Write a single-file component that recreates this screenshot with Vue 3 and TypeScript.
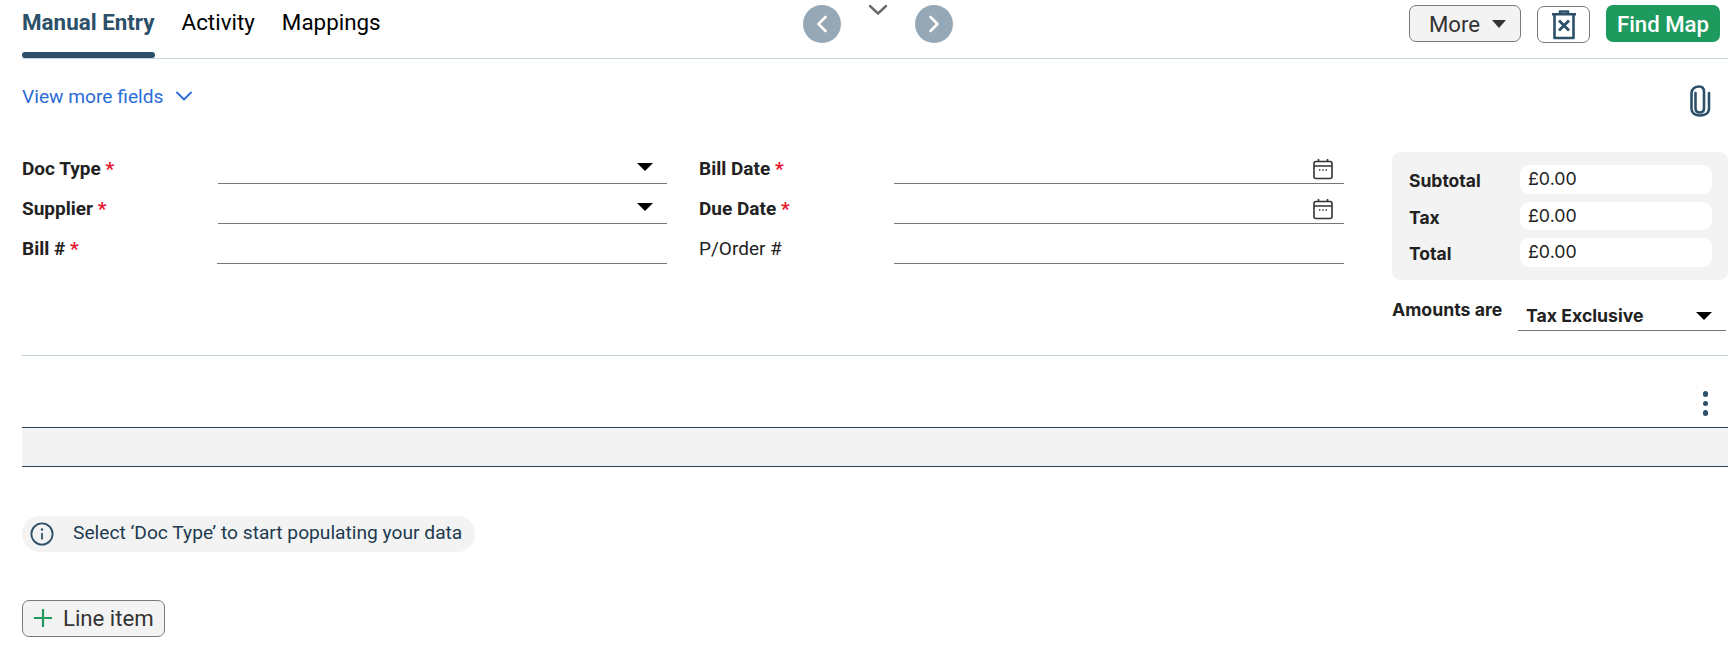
<script setup lang="ts">
const tabs = ['Manual Entry', 'Activity', 'Mappings']
const totals = ['Subtotal', 'Tax', 'Total']
const leftFields = [
  { label: 'Doc Type', required: true, kind: 'select' },
  { label: 'Supplier', required: true, kind: 'select' },
  { label: 'Bill #', required: true, kind: 'text' },
]
const rightFields = [
  { label: 'Bill Date', required: true, kind: 'date' },
  { label: 'Due Date', required: true, kind: 'date' },
  { label: 'P/Order #', required: false, kind: 'text' },
]
</script>

<template>
  <div class="page">
    <header class="head">
      <nav class="tabs">
        <a v-for="(t, i) in tabs" :key="t" class="tab" :class="{ active: i === 0 }">{{ t }}</a>
      </nav>
      <div class="pager">
        <button class="round">
          <svg width="14" height="20" viewBox="0 0 14 20"><path d="M10.5 3 L3.5 10 L10.5 17" fill="none" stroke="#fff" stroke-width="2.6" stroke-linecap="round" stroke-linejoin="round"/></svg>
        </button>
        <svg class="pager-down" width="20" height="12" viewBox="0 0 20 12"><path d="M2 2 L10 9.5 L18 2" fill="none" stroke="#6b6b6b" stroke-width="2.4" stroke-linecap="round" stroke-linejoin="round"/></svg>
        <button class="round">
          <svg width="14" height="20" viewBox="0 0 14 20"><path d="M3.5 3 L10.5 10 L3.5 17" fill="none" stroke="#fff" stroke-width="2.6" stroke-linecap="round" stroke-linejoin="round"/></svg>
        </button>
      </div>
      <div class="actions">
        <button class="btn more">More<span class="caret dark"></span></button>
        <button class="btn trash">
          <svg width="26" height="30" viewBox="0 0 26 30"><path d="M1 4.3 H25 M9 4 V1.5 H17 V4 M3.5 5 V28 H22.5 V5" fill="none" stroke="#2c5069" stroke-width="2.6" stroke-linejoin="round"/><path d="M8 10.5 L18 20.5 M18 10.5 L8 20.5" fill="none" stroke="#2c5069" stroke-width="2.8"/></svg>
        </button>
        <button class="btn find">Find Map</button>
      </div>
    </header>

    <div class="subbar">
      <a class="viewmore">View more fields
        <svg width="16" height="10" viewBox="0 0 16 10"><path d="M1 1.5 L8 8.5 L15 1.5" fill="none" stroke="#2a6cd6" stroke-width="1.8" stroke-linecap="round" stroke-linejoin="round"/></svg>
      </a>
      <svg class="clip" width="22" height="32" viewBox="0 0 22 32"><path d="M6.5 8 V23 C6.5 26 8.5 27.5 10.8 27.5 C13.1 27.5 15 26 15 23 V6.5 C15 3.2 13 1.5 10.5 1.5 C6.5 1.5 3 3.5 2.5 8 V23.5 C2.5 28 6 30.5 11 30.5 C16 30.5 20 28 20 23.5 V8" fill="none" stroke="#2c5069" stroke-width="2.6" stroke-linecap="round"/></svg>
    </div>

    <section class="form">
      <div class="col left">
        <div v-for="f in leftFields" :key="f.label" class="row">
          <label class="lbl" :class="{ strong: f.required }">{{ f.label }} <em v-if="f.required">*</em></label>
          <div class="field"><span v-if="f.kind === 'select'" class="caret"></span></div>
        </div>
      </div>
      <div class="col right">
        <div v-for="f in rightFields" :key="f.label" class="row">
          <label class="lbl" :class="{ strong: f.required }">{{ f.label }} <em v-if="f.required">*</em></label>
          <div class="field">
            <svg v-if="f.kind === 'date'" class="cal" width="20" height="22" viewBox="0 0 20 22">
              <rect x="1" y="3.5" width="18" height="17" rx="2" fill="none" stroke="#333" stroke-width="1.6"/>
              <path d="M1 8 H19 M5.5 1 V4 M14.5 1 V4" fill="none" stroke="#333" stroke-width="1.6"/>
              <path d="M6 12 h1.4 M9.3 12 h1.4 M12.6 12 h1.4" stroke="#333" stroke-width="1.4"/>
            </svg>
          </div>
        </div>
      </div>
      <aside class="side">
        <div class="totals">
          <div v-for="t in totals" :key="t" class="total-row">
            <span class="total-lbl">{{ t }}</span>
            <div class="total-val">£0.00</div>
          </div>
        </div>
        <div class="amounts">
          <span class="amounts-lbl">Amounts are</span>
          <div class="amounts-sel">Tax Exclusive<span class="caret"></span></div>
        </div>
      </aside>
    </section>

    <div class="grid-head">
      <span class="dots"><i></i><i></i><i></i></span>
    </div>
    <div class="grid-row"></div>

    <div class="hint">
      <svg width="24" height="24" viewBox="0 0 24 24"><circle cx="12" cy="12" r="10.6" fill="none" stroke="#2c5069" stroke-width="1.8"/><path d="M12 11 V17.5" stroke="#2c5069" stroke-width="1.8"/><circle cx="12" cy="7.5" r="1.2" fill="#2c5069"/></svg>
      <span>Select ‘Doc Type’ to start populating your data</span>
    </div>

    <button class="btn line">
      <svg width="20" height="20" viewBox="0 0 20 20"><path d="M10 1 V19 M1 10 H19" stroke="#1f9a5f" stroke-width="2.2"/></svg>
      Line item
    </button>
  </div>
</template>

<style>
html, body { margin: 0; background: #fff; }
</style>

<style scoped>
.page {
  width: 1730px;
  height: 651px;
  box-sizing: border-box;
  padding: 0 2px 0 22px;
  font-family: Roboto, "Liberation Sans", sans-serif;
  color: #222;
  overflow: hidden;
}
.head {
  display: flex;
  height: 59px;
  box-sizing: border-box;
  border-bottom: 1px solid #c4d2d9;
}
.tabs { display: flex; gap: 27px; }
.tab {
  height: 58px;
  box-sizing: border-box;
  padding-top: 9px;
  font-size: 22.4px;
  line-height: 26px;
  color: #000;
}
.tab.active {
  font-weight: 700;
  color: #2c5069;
  position: relative;
}
.tab.active::after {
  content: "";
  position: absolute;
  left: 0;
  right: 0;
  bottom: 0;
  height: 6px;
  border-radius: 3px;
  background: #2c5069;
}
.pager {
  display: flex;
  align-items: flex-start;
  margin-left: 422px;
  padding-top: 5px;
  gap: 27px;
}
.round {
  width: 38px;
  height: 38px;
  padding: 0;
  border: 0;
  border-radius: 50%;
  background: #96a8b5;
  display: flex;
  align-items: center;
  justify-content: center;
}
.pager-down { margin-top: -1px; }
.actions {
  margin-left: auto;
  margin-right: 8px;
  display: flex;
  align-items: flex-start;
  padding-top: 5px;
  gap: 16px;
}
.btn {
  box-sizing: border-box;
  height: 37px;
  font-family: inherit;
  font-size: 22.2px;
  border-radius: 7px;
  padding: 0;
  display: flex;
  align-items: center;
}
.more {
  width: 112px;
  background: #f3f3f3;
  border: 1px solid #7a7a7a;
  color: #333;
  padding-left: 19px;
}
.more .caret { margin-left: 12px; }
.trash {
  width: 53px;
  margin-top: 1px;
  background: #fff;
  border: 1px solid #7a7a7a;
  justify-content: center;
}
.find {
  width: 114px;
  background: #1f9a5f;
  border: 0;
  color: #fff;
  justify-content: center;
  font-weight: 500;
}
.caret {
  display: inline-block;
  width: 0;
  height: 0;
  border-left: 8px solid transparent;
  border-right: 8px solid transparent;
  border-top: 8px solid #000;
}
.caret.dark { border-top-color: #333; border-left-width: 7.5px; border-right-width: 7.5px; }
.subbar {
  display: flex;
  justify-content: space-between;
  height: 93px;
  padding-right: 17px;
}
.viewmore {
  display: flex;
  align-items: center;
  gap: 13px;
  height: 22px;
  margin-top: 26px;
  color: #2a6cd6;
  font-size: 19.2px;
}
.clip { margin-top: 26px; }
.form {
  display: flex;
  align-items: flex-start;
  height: 203px;
  border-bottom: 1px solid #c4d2d9;
}
.col { display: flex; flex-direction: column; margin-top: 1px; }
.left { width: 645px; }
.left .row { width: 645px; }
.left .field { width: 449px; margin-left: 196px; }
.left .row:last-child .field { width: 450px; margin-left: 195px; }
.left .row .lbl { width: 0; }
.right { width: 693px; margin-left: 32px; }
.right .row { width: 645px; }
.right .field { width: 450px; margin-left: 195px; }
.right .row .lbl { width: 0; }
.row {
  display: flex;
  height: 40px;
  box-sizing: border-box;
}
.col .row:first-child { height: 31px; }
.lbl {
  font-size: 19px;
  line-height: 24px;
  padding-top: 13px;
  white-space: nowrap;
  color: #222;
}
.col .row:first-child .lbl { padding-top: 4px; }
.lbl.strong { font-weight: 700; }
.lbl em { color: #e8112d; font-style: normal; }
.field {
  box-sizing: border-box;
  border-bottom: 1.2px solid #777;
  position: relative;
  display: flex;
  align-items: flex-start;
  justify-content: flex-end;
  padding-right: 13px;
}
.field .caret { margin-top: 10px; margin-right: 1px; }
.right .field { padding-right: 11px; }
.col .row:not(:first-child) .field .caret { margin-top: 19px; }
.cal { margin-top: 5px; }
.col .row:not(:first-child) .cal { margin-top: 14px; }
.side { width: 336px; font-family: Inter, "Liberation Sans", sans-serif; }
.totals {
  box-sizing: border-box;
  height: 128px;
  padding: 13px 16px;
  background: #f3f3f3;
  border-radius: 8px;
  display: flex;
  flex-direction: column;
  gap: 8px;
}
.total-row { display: flex; height: 29px; }
.total-lbl {
  width: 111px;
  margin-left: 1px;
  padding-top: 4px;
  font-size: 17.5px;
  line-height: 24px;
  font-weight: 700;
  color: #222;
}
.total-val {
  flex: 1;
  background: #fff;
  border-radius: 9px;
  padding-left: 8px;
  font-size: 17.8px;
  line-height: 28px;
  color: #222;
}
.amounts { display: flex; margin-top: 19px; }
.amounts-lbl {
  width: 126px;
  font-size: 17.7px;
  line-height: 22px;
  font-weight: 700;
  color: #222;
}
.amounts-sel {
  width: 208px;
  height: 32px;
  box-sizing: border-box;
  padding: 4px 14px 0 8px;
  display: flex;
  justify-content: space-between;
  font-size: 17.7px;
  line-height: 25px;
  font-weight: 700;
  color: #222;
  border-bottom: 1.2px solid #777;
}
.amounts-sel .caret { margin-top: 9px; }
.grid-head {
  height: 72px;
  box-sizing: border-box;
  border-bottom: 1.2px solid #2c4054;
  position: relative;
}
.dots {
  position: absolute;
  right: 20px;
  top: 35px;
  display: flex;
  flex-direction: column;
  gap: 4px;
}
.dots i {
  width: 5.5px;
  height: 5.5px;
  border-radius: 50%;
  background: #2c5069;
  display: block;
}
.grid-row {
  height: 39px;
  box-sizing: border-box;
  background: #f3f3f3;
  border-bottom: 1.2px solid #2c4054;
}
.hint {
  display: flex;
  align-items: center;
  width: 453px;
  height: 36px;
  box-sizing: border-box;
  margin-top: 49px;
  padding-left: 8px;
  gap: 19px;
  background: #f3f3f3;
  border-radius: 18px;
  font-size: 19.2px;
  line-height: 34px;
  color: #1c3b50;
}
.hint span { margin-top: -2px; }
.line {
  width: 143px;
  margin-top: 48px;
  background: #f3f3f3;
  border: 1px solid #7a7a7a;
  color: #333;
  padding-left: 10px;
  padding-bottom: 1px;
  gap: 10px;
}
</style>
